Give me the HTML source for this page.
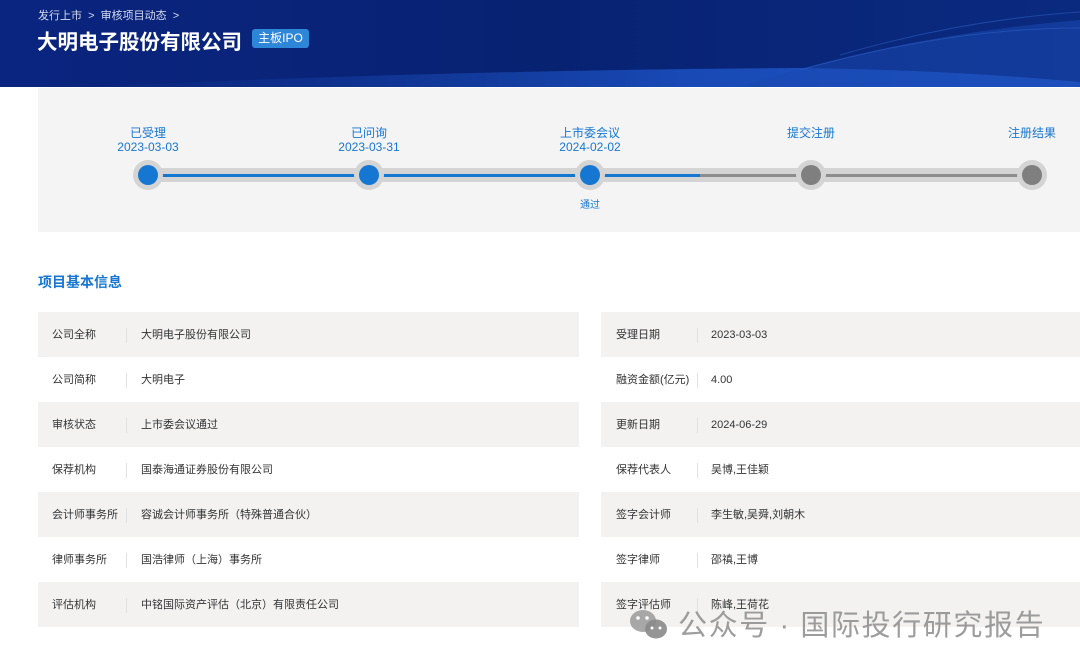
<!DOCTYPE html>
<html><head><meta charset="utf-8"><style>
*{margin:0;padding:0;box-sizing:border-box}
body{width:1080px;height:667px;background:#fff;font-family:"Liberation Sans","Noto Sans CJK SC",sans-serif;position:relative;overflow:hidden}
.hdr{position:absolute;left:0;top:0;width:1080px;height:87px;background:linear-gradient(90deg,#0a2580 0%,#082272 50%,#0a2a80 100%);overflow:hidden}
.bc{position:absolute;left:38px;top:7px;font-size:11px;color:#d6dcef}
.ttl{position:absolute;left:37px;top:25px;font-size:20.5px;font-weight:bold;color:#fff}
.tag{position:absolute;left:252px;top:29px;width:57px;height:19px;background:#2e86d9;border-radius:3px;color:#fff;font-size:12px;line-height:19px;text-align:center}
.prog{position:absolute;left:38px;top:88px;width:1042px;height:144px;background:#f4f4f4}
.lbl{position:absolute;font-size:12px;line-height:14px;text-align:center;width:120px;color:#1677d2}
.h2{position:absolute;left:38px;top:272px;font-size:14px;font-weight:bold;color:#1677d2}
.row{position:absolute;height:45px;font-size:11px;color:#333;line-height:47px}
.row.g{background:#f3f2f1}
.row span{position:absolute;top:0}
.sep{position:absolute;top:16px;width:1px;height:15px;background:#e2e2e2}
.wm{position:absolute;left:678px;top:602px;font-size:29px;color:rgba(140,140,140,.85);letter-spacing:1.6px}
</style></head><body>
<div class="hdr">
<svg width="1080" height="87" style="position:absolute;left:0;top:0">
<defs><linearGradient id="w" x1="0" x2="1"><stop offset="0" stop-color="#1a4ab8" stop-opacity="0"/><stop offset=".6" stop-color="#1c52c4" stop-opacity=".8"/><stop offset="1" stop-color="#2158c8"/></linearGradient></defs>
<path d="M80 87 Q450 70 800 68 Q950 70 1080 82 L1080 87Z" fill="url(#w)"/>
<path d="M740 87 Q900 35 1080 20 L1080 87Z" fill="#1a48b0" opacity=".55"/>
<path d="M840 55 Q960 20 1080 12" stroke="#2f66cc" fill="none" opacity=".5"/>
<path d="M800 70 Q950 28 1080 28" stroke="#2f66cc" fill="none" opacity=".5"/>
</svg>
<div class="bc">发行上市 &nbsp;&gt;&nbsp; 审核项目动态 &nbsp;&gt;</div>
<div class="ttl">大明电子股份有限公司</div>
<div class="tag">主板IPO</div>
</div>
<div class="prog">
<svg width="1042" height="144" style="position:absolute;left:0;top:0">
<rect x="110" y="80" width="884" height="14" rx="7" fill="#d4d4d4"/>
<rect x="110" y="86" width="552" height="3" fill="#1677d2"/>
<rect x="662" y="86" width="332" height="3" fill="#8c8c8c"/>
<g fill="#d4d4d4"><circle cx="110" cy="87" r="15"/><circle cx="331" cy="87" r="15"/><circle cx="552" cy="87" r="15"/><circle cx="773" cy="87" r="15"/><circle cx="994" cy="87" r="15"/></g>
<g fill="#1677d2"><circle cx="110" cy="87" r="10"/><circle cx="331" cy="87" r="10"/><circle cx="552" cy="87" r="10"/></g>
<g fill="#7f7f7f"><circle cx="773" cy="87" r="10"/><circle cx="994" cy="87" r="10"/></g>
</svg>
<div class="lbl" style="left:50px;top:38px">已受理<br>2023-03-03</div>
<div class="lbl" style="left:271px;top:38px">已问询<br>2023-03-31</div>
<div class="lbl" style="left:492px;top:38px">上市委会议<br>2024-02-02</div>
<div class="lbl" style="left:713px;top:38px">提交注册</div>
<div class="lbl" style="left:934px;top:38px">注册结果</div>
<div class="lbl" style="left:492px;top:111px;font-size:10px">通过</div>
</div>
<div class="h2">项目基本信息</div>

<div class="row g" style="left:38px;top:312px;width:541px"><span style="left:14px">公司全称</span><i class="sep" style="left:88px"></i><span style="left:103px">大明电子股份有限公司</span></div>
<div class="row" style="left:38px;top:357px;width:541px"><span style="left:14px">公司简称</span><i class="sep" style="left:88px"></i><span style="left:103px">大明电子</span></div>
<div class="row g" style="left:38px;top:402px;width:541px"><span style="left:14px">审核状态</span><i class="sep" style="left:88px"></i><span style="left:103px">上市委会议通过</span></div>
<div class="row" style="left:38px;top:447px;width:541px"><span style="left:14px">保荐机构</span><i class="sep" style="left:88px"></i><span style="left:103px">国泰海通证券股份有限公司</span></div>
<div class="row g" style="left:38px;top:492px;width:541px"><span style="left:14px">会计师事务所</span><i class="sep" style="left:88px"></i><span style="left:103px">容诚会计师事务所（特殊普通合伙）</span></div>
<div class="row" style="left:38px;top:537px;width:541px"><span style="left:14px">律师事务所</span><i class="sep" style="left:88px"></i><span style="left:103px">国浩律师（上海）事务所</span></div>
<div class="row g" style="left:38px;top:582px;width:541px"><span style="left:14px">评估机构</span><i class="sep" style="left:88px"></i><span style="left:103px">中铭国际资产评估（北京）有限责任公司</span></div>

<div class="row g" style="left:601px;top:312px;width:479px"><span style="left:15px">受理日期</span><i class="sep" style="left:96px"></i><span style="left:110px">2023-03-03</span></div>
<div class="row" style="left:601px;top:357px;width:479px"><span style="left:15px">融资金额(亿元)</span><i class="sep" style="left:96px"></i><span style="left:110px">4.00</span></div>
<div class="row g" style="left:601px;top:402px;width:479px"><span style="left:15px">更新日期</span><i class="sep" style="left:96px"></i><span style="left:110px">2024-06-29</span></div>
<div class="row" style="left:601px;top:447px;width:479px"><span style="left:15px">保荐代表人</span><i class="sep" style="left:96px"></i><span style="left:110px">吴博,王佳颖</span></div>
<div class="row g" style="left:601px;top:492px;width:479px"><span style="left:15px">签字会计师</span><i class="sep" style="left:96px"></i><span style="left:110px">李生敏,吴舜,刘朝木</span></div>
<div class="row" style="left:601px;top:537px;width:479px"><span style="left:15px">签字律师</span><i class="sep" style="left:96px"></i><span style="left:110px">邵禛,王博</span></div>
<div class="row g" style="left:601px;top:582px;width:479px"><span style="left:15px">签字评估师</span><i class="sep" style="left:96px"></i><span style="left:110px">陈峰,王荷花</span></div>

<svg width="44" height="34" style="position:absolute;left:628px;top:608px">
<ellipse cx="15" cy="13" rx="13" ry="11" fill="#9a9a9a" opacity=".85"/>
<ellipse cx="28" cy="21" rx="11" ry="9.5" fill="#8a8a8a" opacity=".9"/>
<circle cx="10" cy="10" r="1.8" fill="#fff"/><circle cx="19" cy="10" r="1.8" fill="#fff"/>
<circle cx="24" cy="20" r="1.5" fill="#fff"/><circle cx="32" cy="20" r="1.5" fill="#fff"/>
</svg>
<div class="wm">公众号 · 国际投行研究报告</div>
</body></html>
